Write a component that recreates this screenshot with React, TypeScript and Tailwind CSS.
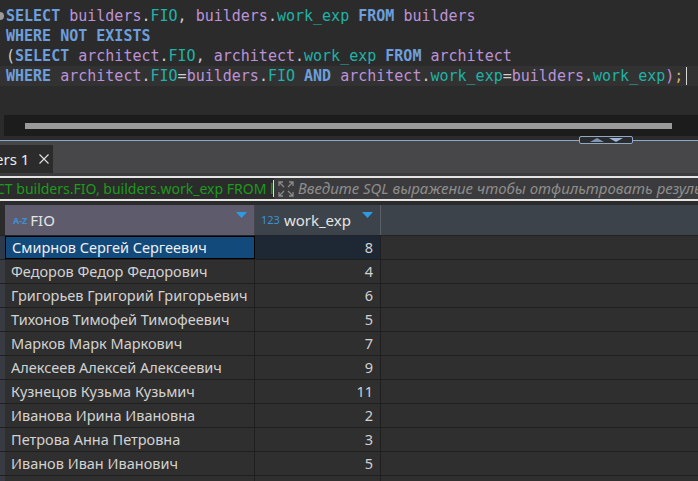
import React from "react";

type Tok = { t: string; c: "k" | "i" | "f" | "p" | "s" };

const colors: Record<Tok["c"], string> = {
  k: "text-[#6d9fdc] font-bold",
  i: "text-[#bd93d8]",
  f: "text-[#1fb3a8]",
  p: "text-[#cfcfcf]",
  s: "text-[#d6b35a]",
};

const k = (t: string): Tok => ({ t, c: "k" });
const i = (t: string): Tok => ({ t, c: "i" });
const f = (t: string): Tok => ({ t, c: "f" });
const p = (t: string): Tok => ({ t, c: "p" });

const code: Tok[][] = [
  [k("SELECT"), p(" "), i("builders"), p("."), f("FIO"), p(", "), i("builders"), p("."), f("work_exp"), p(" "), k("FROM"), p(" "), i("builders")],
  [k("WHERE NOT EXISTS")],
  [p("("), k("SELECT"), p(" "), i("architect"), p("."), f("FIO"), p(", "), i("architect"), p("."), f("work_exp"), p(" "), k("FROM"), p(" "), i("architect")],
  [
    k("WHERE"), p(" "), i("architect"), p("."), f("FIO"), p("="), i("builders"), p("."), f("FIO"), p(" "), k("AND"), p(" "),
    i("architect"), p("."), f("work_exp"), p("="), i("builders"), p("."), f("work_exp"), { t: ")", c: "i" }, { t: ";", c: "s" },
  ],
];

const rows: [string, number][] = [
  ["Смирнов Сергей Сергеевич", 8],
  ["Федоров Федор Федорович", 4],
  ["Григорьев Григорий Григорьевич", 6],
  ["Тихонов Тимофей Тимофеевич", 5],
  ["Марков Марк Маркович", 7],
  ["Алексеев Алексей Алексеевич", 9],
  ["Кузнецов Кузьма Кузьмич", 11],
  ["Иванова Ирина Ивановна", 2],
  ["Петрова Анна Петровна", 3],
  ["Иванов Иван Иванович", 5],
  ["", 0],
];

function SortArrow() {
  return (
    <svg width="11" height="6" viewBox="0 0 11 6" className="shrink-0">
      <path d="M0 0 H11 L5.5 6 Z" fill="#2e9be0" />
    </svg>
  );
}

export default function App() {
  return (
    <div className="flex h-[481px] w-[698px] flex-col overflow-hidden bg-[#2b2b2b] font-['Noto_Sans',sans-serif]">
      {/* editor */}
      <div className="relative flex h-[140px] shrink-0 flex-col bg-[#2b2b2b]">
        <div className="absolute left-[-4px] top-[12px] h-[8px] w-[8px] rounded-full bg-[#9a9a9a]" />
        <div className="flex-1 pt-[6px] font-['DejaVu_Sans_Mono',monospace] text-[15px]">
          {code.map((line, li) => (
            <div
              key={li}
              className={`flex h-5 items-center whitespace-pre pl-[6px] leading-5 ${li === 3 ? "bg-[#323232]" : ""}`}
            >
              {line.map((tok, ti) => (
                <span key={ti} className={colors[tok.c]}>
                  {tok.t}
                </span>
              ))}
              {li === 3 && <span className="ml-[3px] h-[18px] w-[1px] bg-[#d8d8d8]" />}
            </div>
          ))}
        </div>
        <div className="ml-[4px] flex h-[21px] items-start bg-[#1c1c1c] pl-[21px] pt-[8px]">
          <div className="h-[6px] w-[647px] bg-[#9a9a9a]" />
        </div>
        <div className="h-[4px]" />
      </div>

      {/* splitter */}
      <div className="relative h-[1px] shrink-0 bg-[#8fa8c8]">
        <div className="absolute left-[579px] top-[-4px] flex h-[8px] w-[54px] items-center justify-center gap-[5px] rounded-[2px] border border-[#8fa8c8] bg-[#2b2b2b]">
          <svg width="14" height="4" viewBox="0 0 14 4">
            <path d="M0 4 L7 0 L14 4 Z" fill="#7f96b2" />
          </svg>
          <svg width="14" height="4" viewBox="0 0 14 4">
            <path d="M0 0 H14 L7 4 Z" fill="#9fb6d2" />
          </svg>
        </div>
      </div>

      {/* tabs */}
      <div className="flex h-[32px] shrink-0 items-end bg-[#47474a]">
        <div className="flex h-[28px] w-[53px] items-center overflow-hidden whitespace-nowrap bg-[#2b2b2b] text-[15px] text-[#ececec]">
          <span className="ml-[-5px] shrink-0">ers 1</span>
          <svg width="10" height="10" viewBox="0 0 10 10" className="ml-[10px] shrink-0">
            <path d="M0.5 0.5 L9.5 9.5 M9.5 0.5 L0.5 9.5" stroke="#e0e0e0" strokeWidth="1.1" />
          </svg>
        </div>
      </div>
      <div className="h-[3px] shrink-0 bg-[#3c3c3e]" />

      {/* filter */}
      <div className="flex h-[25px] shrink-0 items-stretch border-y-2 border-[#e4e4e4] bg-[#2b2b2b]">
        <div className="flex w-[273px] items-center overflow-hidden whitespace-nowrap text-[14px] text-[#1e9a1e]">
          <span className="ml-[-4px] shrink-0">CT builders.FIO, builders.work_exp FROM l</span>
        </div>
        <div className="my-[2px] w-[1px] bg-[#e0e0e0]" />
        <div className="flex flex-1 items-center gap-[4px] overflow-hidden whitespace-nowrap bg-[#3b3b3d] pl-[4px]">
          <svg width="16" height="16" viewBox="0 0 16 16" className="shrink-0">
            <g stroke="#8a8a8a" strokeWidth="1.3" fill="none">
              <path d="M1 5 V1 H5 M1 1 L6 6" />
              <path d="M11 1 H15 V5 M15 1 L10 6" />
              <path d="M1 11 V15 H5 M1 15 L6 10" />
              <path d="M15 11 V15 H11 M15 15 L10 10" />
            </g>
          </svg>
          <span className="shrink-0 text-[15px] italic text-[#8e8e8e]">
            Введите SQL выражение чтобы отфильтровать результаты
          </span>
        </div>
      </div>

      {/* grid */}
      <div className="flex-1 pt-[4px]">
        <div className="flex h-[31px] border-b border-[#232323]">
          <div className="w-[5px] bg-[#2b2b2b]" />
          <div className="flex w-[250px] items-start border-r border-[#45454d] bg-[#5e5c6c] pl-[8px] pr-[7px]">
            <div className="flex h-[31px] flex-1 items-center gap-[3px]">
              <span className="text-[9px] font-bold text-[#3d8fd8]">A-Z</span>
              <span className="text-[15px] text-[#e4e4e4]">FIO</span>
            </div>
            <div className="pt-[7px]">
              <SortArrow />
            </div>
          </div>
          <div className="flex w-[126px] items-start border-r border-[#5a5f66] bg-[#3c434a] pl-[6px] pr-[7px]">
            <div className="flex h-[31px] flex-1 items-center gap-[4px]">
              <span className="text-[11px] text-[#3d8fd8]">123</span>
              <span className="text-[15px] text-[#e4e4e4]">work_exp</span>
            </div>
            <div className="pt-[7px]">
              <SortArrow />
            </div>
          </div>
          <div className="flex-1 bg-[#3c434a]" />
        </div>
        {rows.map(([name, n], ri) => {
          const sel = ri === 0;
          return (
            <div key={ri} className="flex h-[24px] border-b border-[#1f1f1f] text-[14.5px] text-[#d2d2d2]">
              <div className={`w-[5px] ${sel ? "bg-[#2c3a4a]" : "bg-[#383c42]"}`} />
              <div
                className={`flex w-[250px] items-center overflow-hidden whitespace-nowrap border-r border-[#1f1f1f] pl-[6px] ${
                  sel ? "border border-black bg-[#134a7c] text-[#f0f0f0]" : "bg-[#2f2f2f]"
                }`}
              >
                {name}
              </div>
              <div
                className={`flex w-[126px] items-center justify-end border-r border-[#1f1f1f] pr-[7px] ${
                  sel ? "bg-[#1d2834]" : "bg-[#2f2f2f]"
                }`}
              >
                {name ? n : ""}
              </div>
              <div className="flex-1 bg-[#2f2f2f]" />
            </div>
          );
        })}
      </div>
    </div>
  );
}
